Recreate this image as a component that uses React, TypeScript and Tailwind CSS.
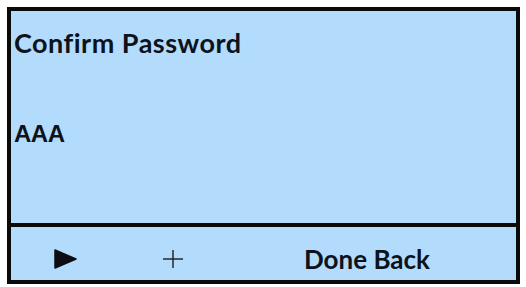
import React from 'react';

const PlayIcon = () => (
  <svg width="23" height="20" viewBox="0 0 23 20" className="block">
    <polygon points="1,1 22,10 1,19" fill="#0b0d12" stroke="#0b0d12" strokeWidth="1.5" strokeLinejoin="round" />
  </svg>
);

const PlusIcon = () => (
  <svg width="20" height="18" viewBox="0 0 20 18" className="block">
    <line x1="0" y1="9" x2="20" y2="9" stroke="#1a1c22" strokeWidth="1.4" />
    <line x1="10" y1="0" x2="10" y2="18" stroke="#1a1c22" strokeWidth="1.4" />
  </svg>
);

const App: React.FC = () => {
  return (
    <div className="w-[526px] h-[287px] bg-white p-[7px]">
      <div className="w-[513px] h-[277px] border-4 border-[#0a0a0a] bg-[#b2dbfc] flex flex-col">
        <div className="flex-1 flex flex-col pl-[3px] pt-[18px]">
          <div className="font-['Lato',sans-serif] font-bold text-[27px] leading-none tracking-[0.5px] text-[#0e121a]">Confirm Password</div>
          <div className="mt-[66px] font-['Liberation_Sans',Arial,sans-serif] font-bold text-[24px] leading-none text-[#0e121a] tracking-[-0.5px]">AAA</div>
        </div>
        <div className="h-[57px] border-t-4 border-[#0a0a0a] flex items-center pt-[11px] pl-[43px]">
          <PlayIcon />
          <div className="ml-[86px]">
            <PlusIcon />
          </div>
          <div className="ml-[121px] font-['Lato',sans-serif] font-bold text-[26px] leading-none text-[#0e121a]">Done Back</div>
        </div>
      </div>
    </div>
  );
};

export default App;
